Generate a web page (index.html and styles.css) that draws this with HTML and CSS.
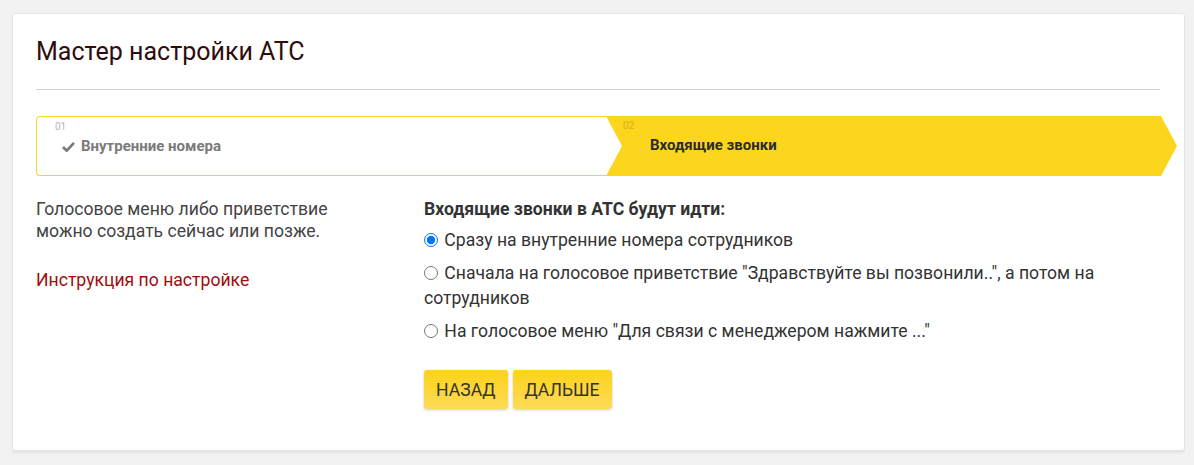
FILE: index.html
```html
<!DOCTYPE html>
<html lang="ru">
<head>
  <meta charset="UTF-8">
  <meta name="viewport" content="width=device-width, initial-scale=1.0">
  <title>Мастер настройки АТС</title>
  <link rel="stylesheet" href="styles.css">
</head>
<body>
  <div class="page">
    <div class="card">
      <!-- Заголовок -->
      <h1 class="card-title">Мастер настройки АТС</h1>
      <hr class="divider">

      <!-- Шаги мастера -->
      <div class="steps">
        <div class="step step-done">
          <span class="step-num">01</span>
          <span class="step-label">
            <svg class="step-icon" viewBox="0 0 14 12" width="13" height="11">
              <path d="M1 6.5 L5 10.5 L13 2" fill="none" stroke="currentColor" stroke-width="3"/>
            </svg>
            Внутренние номера
          </span>
        </div>
        <div class="step step-active">
          <span class="step-num">02</span>
          <span class="step-label">
            <span class="step-icon"></span>
            Входящие звонки
          </span>
        </div>
      </div>

      <!-- Содержимое шага -->
      <div class="wizard-body">
        <div class="wizard-aside">
          <p>Голосовое меню либо приветствие<br>можно создать сейчас или позже.</p>
          <a class="help-link" href="#">Инструкция по настройке</a>
        </div>

        <form class="wizard-form">
          <div class="form-title">Входящие звонки в АТС будут идти:</div>
          <label class="option">
            <input type="radio" name="incoming" value="direct" checked>
            Сразу на внутренние номера сотрудников
          </label>
          <label class="option">
            <input type="radio" name="incoming" value="greeting">
            Сначала на голосовое приветствие "Здравствуйте вы позвонили..", а потом на сотрудников
          </label>
          <label class="option">
            <input type="radio" name="incoming" value="ivr">
            На голосовое меню "Для связи с менеджером нажмите ..."
          </label>

          <div class="buttons">
            <button type="button" class="btn">Назад</button>
            <button type="submit" class="btn">Дальше</button>
          </div>
        </form>
      </div>
    </div>
  </div>
</body>
</html>
```

FILE: styles.css
```css
/* Общие стили */
body {
  margin: 0;
  background-color: #f2f2f2;
  font-family: Roboto, "Liberation Sans", sans-serif;
  color: #444;
}

.page {
  padding: 13px 9px 14px 12px;
}

/* Карточка мастера */
.card {
  background: #fff;
  border: 1px solid #e4e4e4;
  border-radius: 3px;
  box-shadow: 0 2px 2px rgba(0, 0, 0, 0.06);
  padding: 22px 24px 41px 23px;
}

.card-title {
  margin: 0;
  font-size: 25px;
  font-weight: 400;
  line-height: 32px;
  color: #2e0d0d;
}

.divider {
  border: 0;
  border-top: 1px solid #d4d4d4;
  margin: 21px 0 26px;
}

/* Шаги */
.steps {
  display: flex;
  height: 60px;
  width: calc(100% + 17px);
}

.step {
  box-sizing: border-box;
  display: flex;
  flex-direction: column;
  padding: 4px 0 0 17px;
}

.step-num {
  font-size: 10px;
  line-height: 12px;
  color: #b5b5b5;
}

.step-label {
  display: flex;
  align-items: center;
  margin: 3px 0 0 8px;
  font-size: 15px;
  font-weight: 700;
  line-height: 20px;
}

.step-icon {
  display: inline-block;
  width: 13px;
  margin-right: 6px;
}

.step-done {
  flex: 0 0 586px;
  background: #fff;
  border: 1px solid #f8d52a;
  border-right: 0;
  border-radius: 4px 0 0 4px;
  color: #7a7a7a;
}

.step-done .step-num {
  padding-left: 1px;
}

.step-active {
  flex: 1;
  margin-left: -16px;
  background: #fbd51e;
  color: #2b2b2b;
  clip-path: polygon(0 0, calc(100% - 16px) 0, 100% 50%, calc(100% - 16px) 100%, 0 100%, 16px 50%);
}

.step-active .step-num {
  color: #d4b11a;
}

/* Тело шага */
.wizard-body {
  display: grid;
  grid-template-columns: 388px 1fr;
  margin-top: 22px;
}

.wizard-aside p {
  margin: 0;
  font-size: 17.6px;
  line-height: 22px;
  color: #444;
}

.help-link {
  display: inline-block;
  margin-top: 27px;
  font-size: 17.6px;
  line-height: 22px;
  color: #a10c0c;
  text-decoration: none;
}

.wizard-form {
  padding-top: 1px;
}

.form-title {
  font-size: 17.6px;
  font-weight: 700;
  line-height: 20px;
  color: #333;
}

.option {
  display: block;
  margin-top: 9px;
  font-size: 17.6px;
  line-height: 25px;
  color: #333;
}

.option input {
  width: 14px;
  height: 14px;
  margin: 0 2px 0 0;
  vertical-align: -1px;
}

.option + .option {
  margin-top: 8px;
}

/* Кнопки */
.buttons {
  display: flex;
  gap: 5px;
  margin-top: 26px;
}

.btn {
  height: 39px;
  padding: 0 12px;
  border: none;
  border-radius: 3px;
  background: linear-gradient(#fcd21a, #ffdb57);
  box-shadow: 0 1px 3px rgba(0, 0, 0, 0.2);
  font-family: inherit;
  font-size: 17.6px;
  text-transform: uppercase;
  color: #333;
  cursor: pointer;
}
```
